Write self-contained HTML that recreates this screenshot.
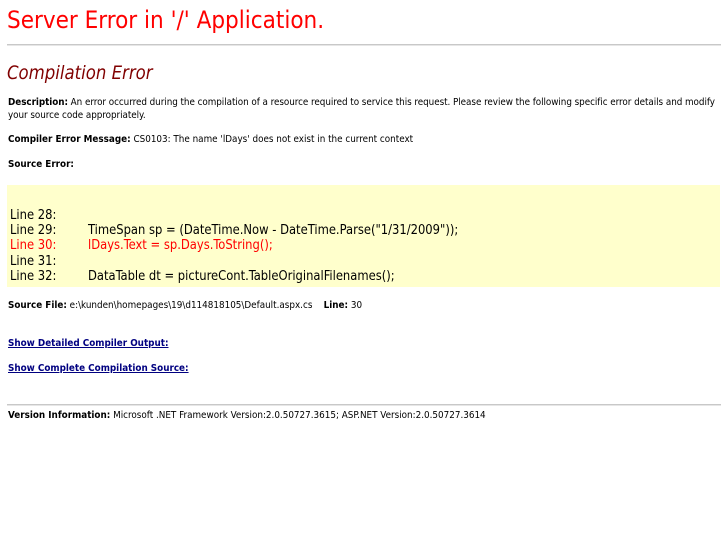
<!DOCTYPE html>
<html><head><meta charset="utf-8"><style>
body{margin:0;background:#fff;font-family:"DejaVu Sans Condensed","DejaVu Sans",sans-serif;color:#000;width:727px;height:545px;overflow:hidden;position:relative}
.a{position:absolute;white-space:nowrap}
.s{font-size:9.8px}
b{font-weight:bold}
.hr{position:absolute;left:7px;width:714px;height:1px;background:#c8c8c8;border-bottom:1px solid #e6e6e6}
a{color:#000080;text-decoration:underline;font-weight:bold}
.code{position:absolute;left:7px;top:185px;width:713px;height:102px;background:#ffffcc}
.cl{position:absolute;font-size:12.85px;white-space:nowrap;color:#000;line-height:15px}
</style></head><body>
<div class="a" style="left:7px;top:6px;font-size:24px;color:#ff0000">Server Error in '/' Application.</div>
<div class="hr" style="top:44px"></div>
<div class="a" style="left:7px;top:63px;font-size:18.4px;color:#800000;font-style:italic">Compilation Error</div>
<div class="a s" style="left:8px;top:96px;line-height:13px;letter-spacing:-0.05px"><b>Description:</b> An error occurred during the compilation of a resource required to service this request. Please review the following specific error details and modify<br>your source code appropriately.</div>
<div class="a s" style="left:8px;top:134px"><b>Compiler Error Message:</b> CS0103: The name 'lDays' does not exist in the current context</div>
<div class="a s" style="left:8px;top:159px"><b>Source Error:</b></div>
<div class="code"></div>
<div class="cl" style="left:10px;top:208px">Line 28:</div>
<div class="cl" style="left:10px;top:223px">Line 29:</div><div class="cl" style="left:88px;top:223px">TimeSpan sp = (DateTime.Now - DateTime.Parse("1/31/2009"));</div>
<div class="cl" style="left:10px;top:238px;color:#ff0000">Line 30:</div><div class="cl" style="left:88px;top:238px;color:#ff0000">lDays.Text = sp.Days.ToString();</div>
<div class="cl" style="left:10px;top:254px">Line 31:</div>
<div class="cl" style="left:10px;top:269px">Line 32:</div><div class="cl" style="left:88px;top:269px">DataTable dt = pictureCont.TableOriginalFilenames();</div>
<div class="a s" style="left:8px;top:300px"><b>Source File:</b> e:\kunden\homepages\19\d114818105\Default.aspx.cs &nbsp;&nbsp; <b>Line:</b> 30</div>
<div class="a s" style="left:8px;top:338px"><a>Show Detailed Compiler Output:</a></div>
<div class="a s" style="left:8px;top:363px"><a>Show Complete Compilation Source:</a></div>
<div class="hr" style="top:404px"></div>
<div class="a s" style="left:8px;top:410px"><b>Version Information:</b> Microsoft .NET Framework Version:2.0.50727.3615; ASP.NET Version:2.0.50727.3614</div>
</body></html>
